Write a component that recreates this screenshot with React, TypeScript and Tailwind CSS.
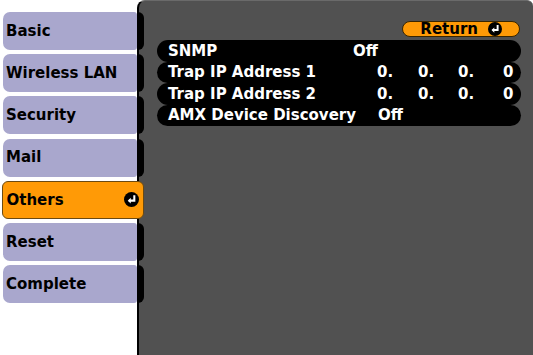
import React from "react";

const EnterIcon = ({ size = 15 }: { size?: number }) => (
  <svg width={size} height={size} viewBox="0 0 16 16">
    <circle cx="8" cy="8" r="8" fill="#000" />
    <path d="M11 3.5 V9.2 H5.2" fill="none" stroke="#fff" strokeWidth="2.2" />
    <path d="M7.2 6.2 L4 9.2 L7.2 12.2 Z" fill="#fff" />
  </svg>
);

const items = ["Basic", "Wireless LAN", "Security", "Mail", "Others", "Reset", "Complete"];

export default function App() {
  const font = { fontFamily: '"DejaVu Sans", Verdana, sans-serif' };
  return (
    <div className="flex w-[533px] h-[355px] bg-white overflow-hidden" style={font}>
      <div className="relative z-10 w-[144px] shrink-0 pt-[12px] flex flex-col gap-[4.2px]">
        {items.map((label) =>
          label === "Others" ? (
            <div key={label} className="flex h-[38px] pl-[1.5px]">
              <div className="flex w-[144px] items-center justify-between rounded-[6px] border border-[#6b4a12] bg-[#ff9a06] pl-[4px] pr-[4px] text-[15px] font-bold text-black">
                <span>{label}</span>
                <EnterIcon size={15} />
              </div>
            </div>
          ) : (
            <div key={label} className="flex h-[38px]">
              <div className="ml-[3px] flex w-[134px] items-center rounded-l-[7px] rounded-r-[3px] bg-[#a9a7cd] pl-[3px] text-[15px] font-bold text-black">
                {label}
              </div>
              <div className="w-[7px] rounded-r-[6px] bg-black" />
            </div>
          )
        )}
      </div>
      <div className="-ml-[7px] flex-1 flex flex-col rounded-tl-[8px] rounded-tr-[6px] border-l-2 border-t border-black border-t-[#6a6a6a] bg-[#515151] pt-[20px] pl-[18px] pr-[12px]">
        <div className="flex justify-end pr-[1px]">
          <div className="flex h-[16px] w-[118px] items-center justify-end gap-[10px] rounded-full border border-[#3a2600] bg-[#ff9a06] pr-[17px] text-[15px] font-bold text-black">
            <span className="leading-none">Return</span>
            <EnterIcon size={14} />
          </div>
        </div>
        <div className="mt-[3px] flex flex-col text-[15px] font-bold text-white">
          <div className="flex h-[21.5px] items-center rounded-full bg-black pl-[11px]">
            <span className="w-[185px]">SNMP</span>
            <span>Off</span>
          </div>
          <div className="flex h-[21.5px] items-center rounded-full bg-black pl-[11px]">
            <span className="w-[209px]">Trap IP Address 1</span>
            <span className="w-[41px]">0.</span>
            <span className="w-[40px]">0.</span>
            <span className="w-[45px]">0.</span>
            <span>0</span>
          </div>
          <div className="flex h-[21.5px] items-center rounded-full bg-black pl-[11px]">
            <span className="w-[209px]">Trap IP Address 2</span>
            <span className="w-[41px]">0.</span>
            <span className="w-[40px]">0.</span>
            <span className="w-[45px]">0.</span>
            <span>0</span>
          </div>
          <div className="flex h-[21.5px] items-center rounded-full bg-black pl-[11px]">
            <span className="w-[210px]">AMX Device Discovery</span>
            <span>Off</span>
          </div>
        </div>
      </div>
    </div>
  );
}
